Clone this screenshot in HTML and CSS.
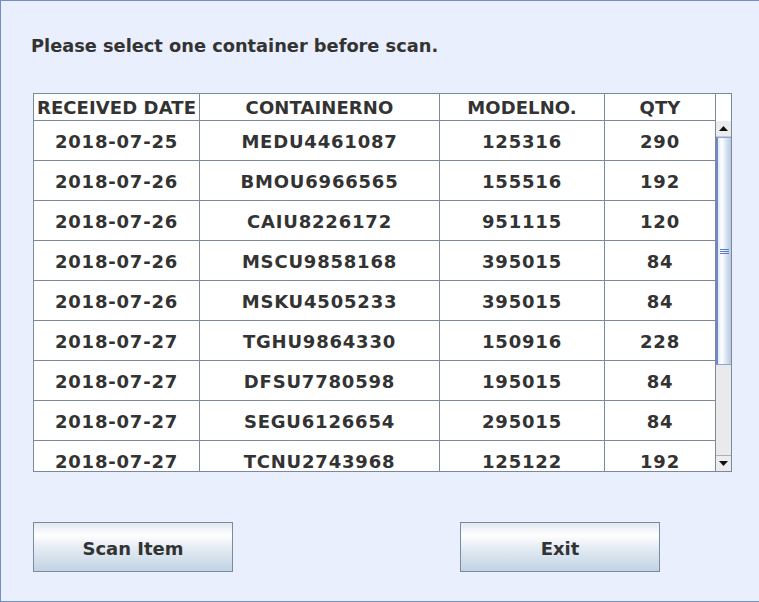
FILE: index.html
```html
<!DOCTYPE html>
<html>
<head>
<meta charset="utf-8">
<link rel="stylesheet" href="styles.css">
</head>
<body>
<div class="window">
  <div class="title">Please select one container before scan.</div>
  <div class="table">
    <div class="row head">
      <div class="c c1">RECEIVED DATE</div>
      <div class="c c2">CONTAINERNO</div>
      <div class="c c3">MODELNO.</div>
      <div class="c c4">QTY</div>
      <div class="corner"></div>
    </div>
    <div class="body">
      <div class="rows">
        <div class="row"><div class="c c1">2018-07-25</div><div class="c c2">MEDU4461087</div><div class="c c3">125316</div><div class="c c4">290</div></div>
        <div class="row"><div class="c c1">2018-07-26</div><div class="c c2">BMOU6966565</div><div class="c c3">155516</div><div class="c c4">192</div></div>
        <div class="row"><div class="c c1">2018-07-26</div><div class="c c2">CAIU8226172</div><div class="c c3">951115</div><div class="c c4">120</div></div>
        <div class="row"><div class="c c1">2018-07-26</div><div class="c c2">MSCU9858168</div><div class="c c3">395015</div><div class="c c4">84</div></div>
        <div class="row"><div class="c c1">2018-07-26</div><div class="c c2">MSKU4505233</div><div class="c c3">395015</div><div class="c c4">84</div></div>
        <div class="row"><div class="c c1">2018-07-27</div><div class="c c2">TGHU9864330</div><div class="c c3">150916</div><div class="c c4">228</div></div>
        <div class="row"><div class="c c1">2018-07-27</div><div class="c c2">DFSU7780598</div><div class="c c3">195015</div><div class="c c4">84</div></div>
        <div class="row"><div class="c c1">2018-07-27</div><div class="c c2">SEGU6126654</div><div class="c c3">295015</div><div class="c c4">84</div></div>
        <div class="row"><div class="c c1">2018-07-27</div><div class="c c2">TCNU2743968</div><div class="c c3">125122</div><div class="c c4">192</div></div>
      </div>
      <div class="scrollbar">
        <div class="arrow"><svg width="9" height="5" viewBox="0 0 9 5"><path d="M0 5 L4.5 0 L9 5 Z" fill="#111"/></svg></div>
        <div class="thumb"><div class="grip"></div></div>
        <div class="track"></div>
        <div class="arrow"><svg width="9" height="5" viewBox="0 0 9 5"><path d="M0 0 L4.5 5 L9 0 Z" fill="#111"/></svg></div>
      </div>
    </div>
  </div>
  <div class="buttons">
    <div class="btn">Scan Item</div>
    <div class="btn">Exit</div>
  </div>
</div>
</body>
</html>
```
FILE: styles.css
```css
html, body {
  margin: 0;
  padding: 0;
  background: #e9effc;
}
.window {
  width: 759px;
  height: 602px;
  box-sizing: border-box;
  border-top: 1px solid #6f8fc7;
  border-left: 1px solid #6f8fc7;
  border-bottom: 1px solid #6f8fc7;
  background: #e9effc;
  font-family: "DejaVu Sans", Verdana, sans-serif;
  font-weight: bold;
  color: #333;
  padding: 0 0 0 32px;
  display: flex;
  flex-direction: column;
}
.title {
  font-size: 17.8px;
  margin: 34px 0 0 -2px;
  height: 22px;
  line-height: 22px;
}
.table {
  margin-top: 36px;
  width: 699px;
  height: 379px;
  box-sizing: border-box;
  border: 1px solid #7c8998;
  background: #fff;
  display: flex;
  flex-direction: column;
  font-size: 18px;
  letter-spacing: 0.1px;
}
.row {
  display: flex;
  height: 40px;
  flex: none;
}
.row.head {
  height: 27px;
}
.rows .c {
  letter-spacing: 0.8px;
}
.c {
  box-sizing: border-box;
  border-right: 1px solid #7c8998;
  border-bottom: 1px solid #7c8998;
  display: flex;
  align-items: center;
  justify-content: center;
  white-space: nowrap;
  padding-top: 2px;
}
.head .c { padding-top: 1px; }
.c1 { width: 166px; }
.c2 { width: 240px; }
.c3 { width: 165px; }
.c4 { width: 111px; }
.corner {
  width: 15px;
  border-bottom: 1px solid #fff;
}
.body {
  display: flex;
  height: 350px;
  overflow: hidden;
}
.rows {
  width: 682px;
  display: flex;
  flex-direction: column;
}
.scrollbar {
  width: 15px;
  display: flex;
  flex-direction: column;
  background: #eaeaea;
}
.arrow {
  height: 16px;
  flex: none;
  box-sizing: border-box;
  background: #ececec;
  display: flex;
  align-items: center;
  justify-content: center;
}
.arrow:first-child { border-bottom: 1px solid #c8ccd2; }
.arrow:last-child { border-top: 1px solid #a9b0b9; }
.thumb {
  height: 228px;
  flex: none;
  box-sizing: border-box;
  border-left: 2px solid #6d89c9;
  border-top: 1px solid #8ca6d8;
  border-bottom: 1px solid #8ca6d8;
  background: linear-gradient(to right, #dfe8f6 0%, #ffffff 30%, #dce6f4 60%, #b7c9e2 100%);
  display: flex;
  align-items: center;
  justify-content: center;
}
.grip {
  width: 9px;
  height: 5px;
  background: repeating-linear-gradient(to bottom, #5a7cc4 0 1px, transparent 1px 2px);
}
.track { flex: 1; background: #eaeaea; }
.buttons {
  margin-top: 50px;
  display: flex;
  gap: 227px;
}
.btn {
  width: 200px;
  height: 50px;
  box-sizing: border-box;
  border: 1px solid #7b8b9c;
  background: linear-gradient(to bottom, #e2e9f1 0%, #ffffff 25%, #e6edf4 50%, #c2d3e4 100%);
  display: flex;
  align-items: center;
  justify-content: center;
  font-size: 18px;
  padding-top: 2px;
}
```
